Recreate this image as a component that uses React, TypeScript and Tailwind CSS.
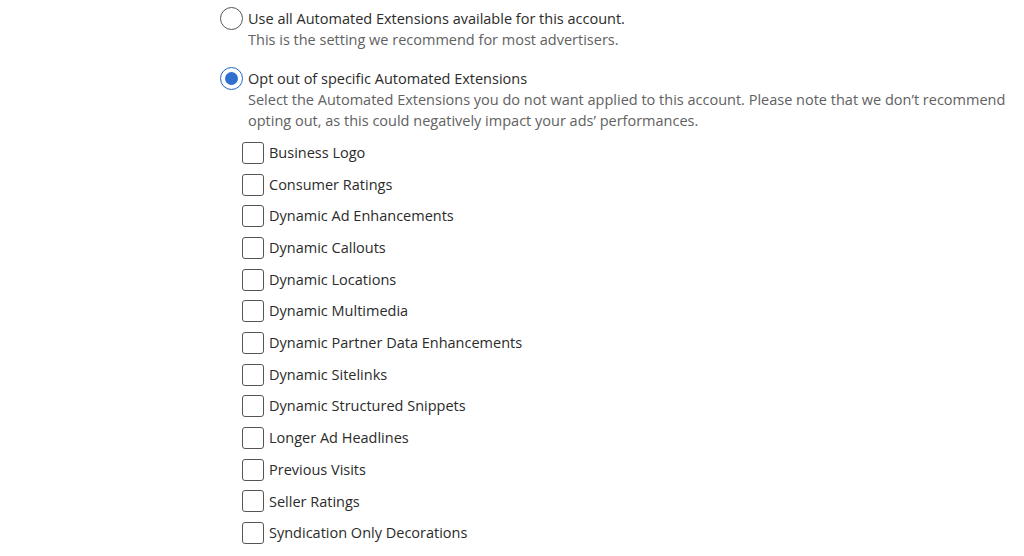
const items = [
  'Business Logo',
  'Consumer Ratings',
  'Dynamic Ad Enhancements',
  'Dynamic Callouts',
  'Dynamic Locations',
  'Dynamic Multimedia',
  'Dynamic Partner Data Enhancements',
  'Dynamic Sitelinks',
  'Dynamic Structured Snippets',
  'Longer Ad Headlines',
  'Previous Visits',
  'Seller Ratings',
  'Syndication Only Decorations',
];

function Radio({ checked }: { checked?: boolean }) {
  return (
    <span
      className={`flex h-[23px] w-[23px] shrink-0 items-center justify-center rounded-full border-[1.5px] ${
        checked ? 'border-[#2266c4]' : 'border-[#555]'
      }`}
    >
      {checked && <span className="h-[13px] w-[13px] rounded-full bg-[#2f6fd0]" />}
    </span>
  );
}

export default function App() {
  return (
    <div className="h-[556px] w-[1024px] overflow-hidden bg-white pl-[220px] pt-[7px] font-['Open_Sans',sans-serif] text-[14.5px] text-[#2b2b2b]">
      <div className="flex gap-[5px]">
        <Radio />
        <div className="leading-[21px]">
          <div className="pt-px">Use all Automated Extensions available for this account.</div>
          <div className="text-[#616161]">This is the setting we recommend for most advertisers.</div>
        </div>
      </div>

      <div className="mt-[17px] flex gap-[5px]">
        <Radio checked />
        <div className="leading-[21px]">
          <div className="pt-px">Opt out of specific Automated Extensions</div>
          <div className="text-[#616161]">
            Select the Automated Extensions you do not want applied to this account. Please note that we don’t recommend
            <br />
            opting out, as this could negatively impact your ads’ performances.
          </div>
        </div>
      </div>

      <div className="mt-[6px] flex flex-col pl-[22px]">
        {items.map((label) => (
          <label key={label} className="flex h-[31.7px] items-center gap-[5px]">
            <span className="h-[22px] w-[22px] shrink-0 rounded-[3px] border-[1.5px] border-[#555]" />
            <span>{label}</span>
          </label>
        ))}
      </div>
    </div>
  );
}
